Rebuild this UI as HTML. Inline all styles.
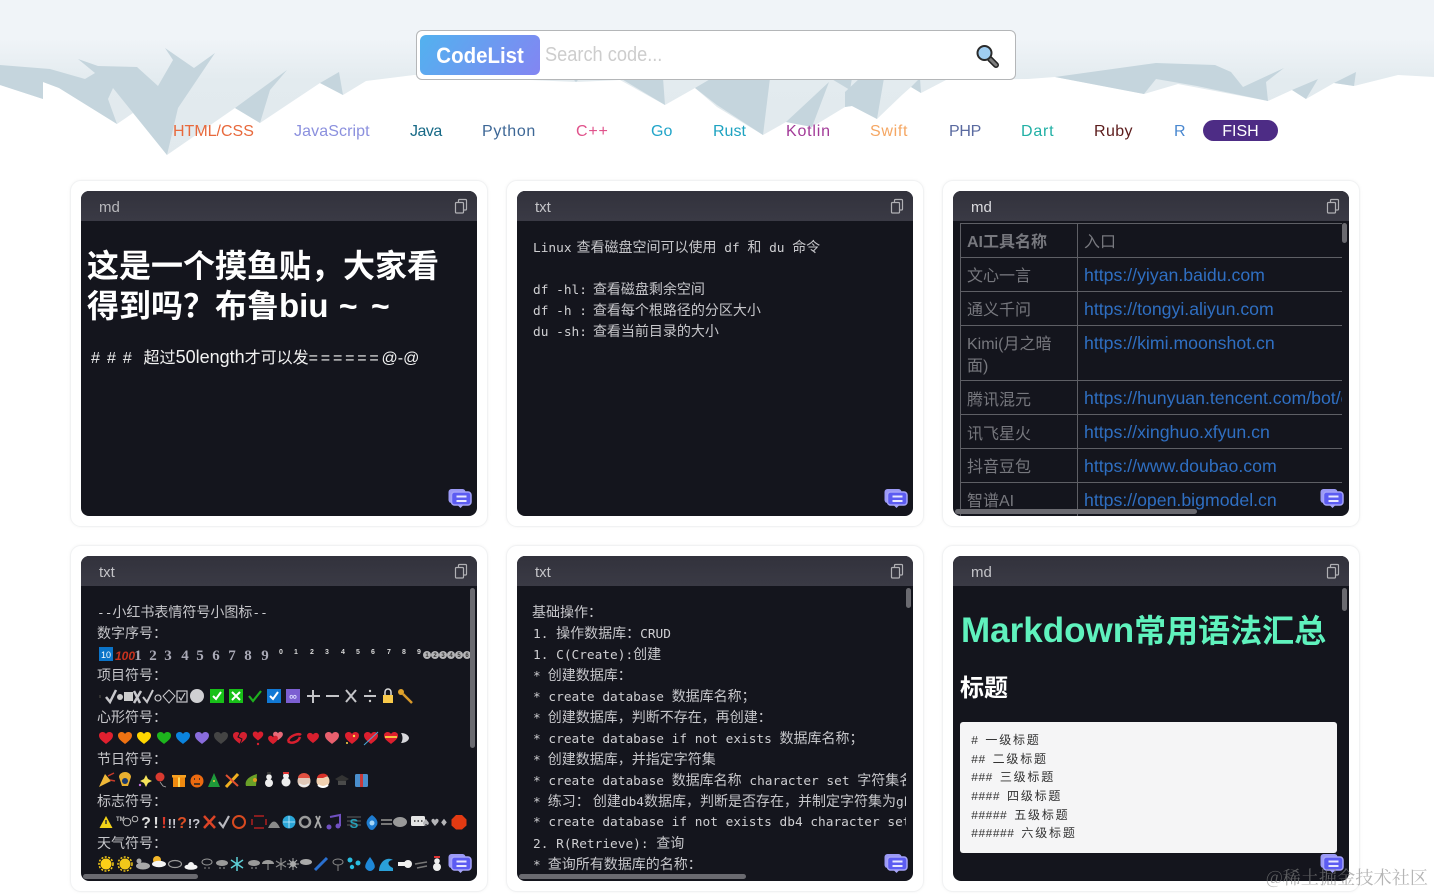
<!DOCTYPE html>
<html lang="zh"><head><meta charset="utf-8"><title>CodeList</title>
<style>
html,body{margin:0;padding:0;background:#fff;width:1434px;height:894px;overflow:hidden}
body{position:relative;font-family:"Liberation Sans","Noto Sans CJK SC",sans-serif}
.a{position:absolute;white-space:pre}
.nav{top:120px;font-size:16px;line-height:22px;height:22px;padding-top:1px}
.card{position:absolute;width:416px;height:345px;border:1px solid #f1f2f3;border-radius:11px;box-shadow:0 0 3px rgba(0,0,0,.05);background:#fff}
.inner{position:absolute;width:396px;height:325px;border-radius:8px;background:#14151d}
.head{position:absolute;left:0;top:0;width:396px;height:30px;border-radius:8px 8px 0 0;background:linear-gradient(#32323c,#3a3a45)}
.lab{position:absolute;top:1px;left:18px;font-size:15px;line-height:31px;color:#c4c4c8}
.clip{position:absolute;left:0;top:0;width:1434px;height:894px}
.l{position:absolute;white-space:pre;font:12.8px/21px "DejaVu Sans Mono","Liberation Mono","Noto Sans CJK SC",monospace;height:21px;color:#cfcfd2}
.l i{font:normal 14px/21px "Noto Sans CJK SC",sans-serif;color:#c6c6ca}
.bar{position:absolute;background:#6a6a70;border-radius:3px}
.tc{position:absolute;white-space:pre;font-size:16px;line-height:24px;color:#77787e;margin-top:2px}
.tl{position:absolute;white-space:pre;font-size:17.7px;line-height:24px;color:#2f6fc2;left:1084px}
.ln{position:absolute;background:#5e5f65}
.cb{position:absolute;white-space:pre;left:971px;font:12px/18px "Liberation Mono",monospace;color:#333;height:18px}
.cb i{font:normal 12px/18px "Noto Sans CJK SC",sans-serif;letter-spacing:1.8px}
svg{position:absolute;left:0;top:0}
</style></head><body>

<svg width="1434" height="170" viewBox="0 0 1434 170">
<defs><linearGradient id="g" x1="0" y1="0" x2="0" y2="1"><stop offset="0" stop-color="#f0f4f8"/><stop offset=".24" stop-color="#f0f4f8"/><stop offset=".5" stop-color="#e3ebef"/><stop offset="1" stop-color="#e1e9ed"/></linearGradient></defs>
<rect width="1434" height="160" fill="url(#g)"/>
<path fill="#fff" d="M0 85L43 99L43 82L59 88L117 124L133 113L167 155L235 108L260 123L320 83L343 95L366 81L414 75L576 82L620 80L665 105L695 88L717 107L763 135L786 122L812 127L845 107L852 106L877 119L902 95L911 87L921 93L946 80L1028 79L1055 77L1144 94L1178 84L1268 101L1292 90L1306 99L1334 83L1354 86L1398 75L1434 77V170H0Z"/>
<g fill="#c5d5dd">
<path d="M0 65L50 69L85 79L95 73L78 59L98 66L137 67L158 86L173 60L165 48L194 68L215 53L178 108L167 155L113 88L108 99L117 124L59 88L43 82L43 99L0 85Z"/>
<path d="M235 108L287 70L270 90L260 123Z"/>
<path d="M320 83L339 72L343 95Z"/>
<path d="M572 78L580 78L576 82Z"/>
<path d="M620 78L665 105L663 78Z"/>
<path d="M695 88L717 105L763 135L770 78L712 78Z"/>
<path d="M786 122L829 82L812 127Z"/>
<path d="M830 78L850 90L852 78Z"/>
<path d="M845 92L845 107L852 106L877 119L884 78L860 78Z"/>
<path d="M911 87L920 78L921 93Z"/>
<path d="M1055 77L1156 63L1215 65L1231 72L1243 87L1284 68L1266 82L1268 101L1197 86L1156 79L1144 94Z"/>
<path d="M1292 90L1318 79L1306 99Z"/>
<path d="M1334 83L1356 72L1354 86Z"/>
</g>
</svg>

<!-- search -->
<div class="a" style="left:416px;top:30px;width:598px;height:48px;border:1px solid #b4b6b8;border-radius:6px;background:#fff"></div>
<div class="a" style="left:420px;top:35px;width:120px;height:40px;border-radius:6px;background:linear-gradient(125deg,#52b2ef,#8385f2);color:#fff;font-weight:700;font-size:22px;line-height:41px;text-align:center"><span style="display:inline-block;transform:scaleX(.93)">CodeList</span></div>
<div class="a" style="left:545px;top:41px;font-size:20px;line-height:28px;color:#cdcdcd;transform:scaleX(.91);transform-origin:0 0">Search code...</div>
<svg width="1434" height="100" style="pointer-events:none">
<line x1="990" y1="59" x2="996" y2="65" stroke="#222" stroke-width="6" stroke-linecap="round"/>
<line x1="990" y1="59" x2="996" y2="65" stroke="#7d7d7d" stroke-width="3" stroke-linecap="round"/>
<circle cx="984.500" cy="53" r="7" fill="#9fcdf0" stroke="#2b2b2b" stroke-width="2"/>
</svg>

<!-- nav -->
<div class="a nav" style="left:173px;color:#e8693c">HTML/CSS</div>
<div class="a nav" style="left:294px;color:#8b90de;letter-spacing:.1px">JavaScript</div>
<div class="a nav" style="left:410px;color:#186a87;letter-spacing:-.5px">Java</div>
<div class="a nav" style="left:482px;color:#3d6796;letter-spacing:.7px">Python</div>
<div class="a nav" style="left:576px;color:#e0528b;letter-spacing:.8px">C++</div>
<div class="a nav" style="left:651px;color:#22a5c9">Go</div>
<div class="a nav" style="left:713px;color:#1ea3c1">Rust</div>
<div class="a nav" style="left:786px;color:#a23a98;letter-spacing:.8px">Kotlin</div>
<div class="a nav" style="left:870px;color:#f5a763;letter-spacing:.7px">Swift</div>
<div class="a nav" style="left:949px;color:#5a6aa0;letter-spacing:-.3px">PHP</div>
<div class="a nav" style="left:1021px;color:#21b0a5;letter-spacing:.8px">Dart</div>
<div class="a nav" style="left:1094px;color:#5c1c1c;letter-spacing:.4px">Ruby</div>
<div class="a nav" style="left:1174px;color:#4a88d0;letter-spacing:-.3px">R</div>
<div class="a" style="left:1203px;top:120px;width:75px;height:21px;border-radius:11px;background:#4d2c85;color:#fff;font-size:16px;line-height:23px;text-align:center">FISH</div>

<!-- cards -->
<div class="card" style="left:70px;top:180px"></div>
<div class="card" style="left:506px;top:180px"></div>
<div class="card" style="left:942px;top:180px"></div>
<div class="card" style="left:70px;top:545px"></div>
<div class="card" style="left:506px;top:545px"></div>
<div class="card" style="left:942px;top:545px"></div>

<div class="inner" style="left:81px;top:191px"><div class="head"></div><div class="lab" style="color:#b8b8bc">md</div></div>
<div class="inner" style="left:517px;top:191px"><div class="head"></div><div class="lab">txt</div></div>
<div class="inner" style="left:953px;top:191px"><div class="head"></div><div class="lab" style="color:#dcdce0">md</div></div>
<div class="inner" style="left:81px;top:556px"><div class="head"></div><div class="lab">txt</div></div>
<div class="inner" style="left:517px;top:556px"><div class="head"></div><div class="lab">txt</div></div>
<div class="inner" style="left:953px;top:556px"><div class="head"></div><div class="lab">md</div></div>

<!-- card 1 -->
<div class="a" style="left:87px;top:246px;font-size:32px;line-height:40px;font-weight:700;color:#fff;word-spacing:1.500px">这是一个摸鱼贴，大家看
得到吗？布鲁<span style="font-size:33px">biu</span> ~ <span style="margin-left:3px">~</span></div>
<div class="a" style="left:91px;top:345px;font-size:16px;line-height:24px;color:#f2f2f2"><span style="letter-spacing:1.300px"># # #</span><span style="margin-left:6px"> </span>超过<span style="font-size:18px">50length</span>才可以发<span style="letter-spacing:2.800px">======</span>@-@</div>

<!-- card 2 -->
<div class="l" style="left:533px;top:237px">Linux<i style="margin-left:5px">查看磁盘空间可以使用</i> df <i>和</i> du <i>命令</i></div>
<div class="l" style="left:533px;top:279px">df -hl:<i style="margin-left:6px">查看磁盘剩余空间</i></div>
<div class="l" style="left:533px;top:300px">df -h :<i style="margin-left:6px">查看每个根路径的分区大小</i></div>
<div class="l" style="left:533px;top:321px">du -sh:<i style="margin-left:6px">查看当前目录的大小</i></div>

<!-- card 3 -->
<div class="clip" style="clip-path:inset(222px 92px 378px 953px)">
<div class="ln" style="left:960px;top:223px;width:382px;height:1px"></div>
<div class="ln" style="left:960px;top:257px;width:382px;height:1px"></div>
<div class="ln" style="left:960px;top:291px;width:382px;height:1px"></div>
<div class="ln" style="left:960px;top:325px;width:382px;height:1px"></div>
<div class="ln" style="left:960px;top:380px;width:382px;height:1px"></div>
<div class="ln" style="left:960px;top:414px;width:382px;height:1px"></div>
<div class="ln" style="left:960px;top:448px;width:382px;height:1px"></div>
<div class="ln" style="left:960px;top:482px;width:382px;height:1px"></div>
<div class="ln" style="left:960px;top:223px;width:1px;height:300px"></div>
<div class="ln" style="left:1077px;top:223px;width:1px;height:300px"></div>
<div class="tc" style="left:967px;top:229px;font-weight:700;color:#77787e">AI工具名称</div>
<div class="tc" style="left:1084px;top:229px;color:#77787e">入口</div>
<div class="tc" style="left:967px;top:263px">文心一言</div>
<div class="tc" style="left:967px;top:297px">通义千问</div>
<div class="tc" style="left:967px;top:331px">Kimi(月之暗</div>
<div class="tc" style="left:967px;top:353px">面)</div>
<div class="tc" style="left:967px;top:387px">腾讯混元</div>
<div class="tc" style="left:967px;top:421px">讯飞星火</div>
<div class="tc" style="left:967px;top:454px">抖音豆包</div>
<div class="tc" style="left:967px;top:488px">智谱AI</div>
<div class="tl" style="top:263px">https://yiyan.baidu.com</div>
<div class="tl" style="top:297px">https://tongyi.aliyun.com</div>
<div class="tl" style="top:331px">https://kimi.moonshot.cn</div>
<div class="tl" style="top:386px">https://hunyuan.tencent.com/bot/chat</div>
<div class="tl" style="top:420px">https://xinghuo.xfyun.cn</div>
<div class="tl" style="top:454px">https://www.doubao.com</div>
<div class="tl" style="top:488px">https://open.bigmodel.cn</div>
</div>
<div class="bar" style="left:1342px;top:223px;width:5px;height:20px"></div>
<div class="bar" style="left:955px;top:509px;width:242px;height:5px"></div>

<!-- card 4 -->
<div class="l" style="left:97px;top:602px">--<i>小红书表情符号小图标</i>--</div>
<div class="l" style="left:97px;top:623px"><i>数字序号：</i></div>
<div class="l" style="left:97px;top:665px"><i>项目符号：</i></div>
<div class="l" style="left:97px;top:707px"><i>心形符号：</i></div>
<div class="l" style="left:97px;top:749px"><i>节日符号：</i></div>
<div class="l" style="left:97px;top:791px"><i>标志符号：</i></div>
<div class="l" style="left:97px;top:833px"><i>天气符号：</i></div>

<svg width="1434" height="894" style="clip-path:inset(556px 964px 15px 81px)" font-family="Liberation Sans" font-weight="700">
<!-- row 1 -->
<rect x="99" y="647" width="14" height="14" fill="#0b74c9"/><text x="106" y="658" font-size="9" fill="#fff" text-anchor="middle" font-weight="400">10</text>
<text x="125" y="660" font-size="12" font-style="italic" fill="#c8321e" text-anchor="middle">100</text>
<g font-size="15" fill="#a9a9b6" text-anchor="middle" font-family="Liberation Serif">
<text x="138" y="660">1</text><text x="153" y="660">2</text><text x="168" y="660">3</text><text x="185" y="660">4</text><text x="200" y="660">5</text><text x="216" y="660">6</text><text x="232" y="660">7</text><text x="248" y="660">8</text><text x="265" y="660">9</text></g>
<g font-size="7" fill="#d8d8d8" text-anchor="middle">
<text x="281" y="654">0</text><text x="296" y="654">1</text><text x="312" y="654">2</text><text x="327" y="654">3</text><text x="343" y="654">4</text><text x="358" y="654">5</text><text x="373" y="654">6</text><text x="389" y="654">7</text><text x="404" y="654">8</text><text x="419" y="654">9</text></g>
<g fill="#b5b5b8"><circle cx="427" cy="655" r="4"/><circle cx="435" cy="655" r="4"/><circle cx="443" cy="655" r="4"/><circle cx="451" cy="655" r="4"/><circle cx="459" cy="655" r="4"/><circle cx="467" cy="655" r="4"/></g>
<g font-size="6" fill="#333" text-anchor="middle"><text x="427" y="657">1</text><text x="435" y="657">2</text><text x="443" y="657">3</text><text x="451" y="657">4</text><text x="459" y="657">5</text><text x="467" y="657">6</text></g>
<!-- row 2 -->
<rect x="99" y="695" width="2" height="3" fill="#333"/>
<g fill="none" stroke="#c8c8cc" stroke-width="2">
<path d="M106 697L110 702L116 690" stroke-width="2.500"/>
<path d="M134 691L140 703M141 691L134 703" stroke-width="2.500"/>
<path d="M143 697L147 702L153 690" stroke-width="2"/>
<circle cx="158" cy="698" r="3" stroke-width="1.200"/>
<path d="M169 690L175 696L169 703L163 696Z" stroke-width="1"/>
<rect x="177" y="691" width="10" height="11" stroke-width="1.200"/><path d="M179 697L181 700L185 693" stroke-width="1.200"/>
<path d="M307 696H320M313 690V703M326 696H339M346 690L356 702M356 690L346 702M364 696H376" stroke="#c4c4c8" stroke-width="2"/>
</g>
<circle cx="120" cy="697" r="3" fill="#ccc"/><rect x="124" y="692" width="9" height="9" fill="#ccc"/>
<circle cx="197" cy="696" r="7" fill="#cfcfd2"/>
<rect x="210" y="689" width="14" height="14" fill="#18c018"/><path d="M213 696L216 699L221 692" fill="none" stroke="#fff" stroke-width="2"/>
<rect x="229" y="689" width="14" height="14" fill="#18c018"/><path d="M232 692L240 700M240 692L232 700" stroke="#fff" stroke-width="2"/>
<path d="M249 696L253 701L261 691" fill="none" stroke="#1eb01e" stroke-width="2.200"/>
<rect x="267" y="689" width="14" height="14" fill="#1178d4"/><path d="M270 696L273 699L278 692" fill="none" stroke="#fff" stroke-width="2"/>
<rect x="286" y="689" width="14" height="14" fill="#7c5fd2"/><text x="293" y="700" font-size="11" fill="#d8d8ff" text-anchor="middle">∞</text>
<circle cx="370" cy="691" r="1.200" fill="#ccc"/><circle cx="370" cy="701" r="1.200" fill="#ccc"/>
<rect x="383" y="695" width="10" height="8" fill="#f8c94a"/><path d="M385 695V692A3 3 0 0 1 391 692V695" fill="none" stroke="#ddd" stroke-width="1.500"/>
<circle cx="401" cy="692" r="3" fill="#e0a22a"/><path d="M403 694L412 703" stroke="#d8982a" stroke-width="2.500"/>
<!-- row 3 hearts -->
<g>
<path fill="#e0202f" transform="translate(106 738)" d="M0 6C-3 3.500-7 1-7-2.500C-7-5-5-6-3.500-6C-2-6-.7-5.200 0-4C.7-5.200 2-6 3.500-6C5-6 7-5 7-2.500C7 1 3 3.500 0 6Z"/>
<path fill="#ef7212" transform="translate(125 738)" d="M0 6C-3 3.500-7 1-7-2.500C-7-5-5-6-3.500-6C-2-6-.7-5.200 0-4C.7-5.200 2-6 3.500-6C5-6 7-5 7-2.500C7 1 3 3.500 0 6Z"/>
<path fill="#ffd600" transform="translate(144 738)" d="M0 6C-3 3.500-7 1-7-2.500C-7-5-5-6-3.500-6C-2-6-.7-5.200 0-4C.7-5.200 2-6 3.500-6C5-6 7-5 7-2.500C7 1 3 3.500 0 6Z"/>
<path fill="#1db51d" transform="translate(164 738)" d="M0 6C-3 3.500-7 1-7-2.500C-7-5-5-6-3.500-6C-2-6-.7-5.200 0-4C.7-5.200 2-6 3.500-6C5-6 7-5 7-2.500C7 1 3 3.500 0 6Z"/>
<path fill="#0b84de" transform="translate(183 738)" d="M0 6C-3 3.500-7 1-7-2.500C-7-5-5-6-3.500-6C-2-6-.7-5.200 0-4C.7-5.200 2-6 3.500-6C5-6 7-5 7-2.500C7 1 3 3.500 0 6Z"/>
<path fill="#8a6cdc" transform="translate(202 738)" d="M0 6C-3 3.500-7 1-7-2.500C-7-5-5-6-3.500-6C-2-6-.7-5.200 0-4C.7-5.200 2-6 3.500-6C5-6 7-5 7-2.500C7 1 3 3.500 0 6Z"/>
<path fill="#444" transform="translate(221 738)" d="M0 6C-3 3.500-7 1-7-2.500C-7-5-5-6-3.500-6C-2-6-.7-5.200 0-4C.7-5.200 2-6 3.500-6C5-6 7-5 7-2.500C7 1 3 3.500 0 6Z"/>
<path fill="#d42030" transform="translate(240 738)" d="M0 6C-3 3.500-7 1-7-2.500C-7-5-5-6-3.500-6C-2-6-.7-5.200 0-4C.7-5.200 2-6 3.500-6C5-6 7-5 7-2.500C7 1 3 3.500 0 6Z"/>
<path d="M240 733L238 737L242 739L240 744" fill="none" stroke="#14151d" stroke-width="1"/>
<path fill="#d81f2e" transform="translate(258 736) scale(.75)" d="M0 6C-3 3.500-7 1-7-2.500C-7-5-5-6-3.500-6C-2-6-.7-5.200 0-4C.7-5.200 2-6 3.500-6C5-6 7-5 7-2.500C7 1 3 3.500 0 6Z"/><circle cx="258" cy="744" r="1.200" fill="#d81f2e"/>
<path fill="#e86a78" transform="translate(278 736) scale(.7)" d="M0 6C-3 3.500-7 1-7-2.500C-7-5-5-6-3.500-6C-2-6-.7-5.200 0-4C.7-5.200 2-6 3.500-6C5-6 7-5 7-2.500C7 1 3 3.500 0 6Z"/>
<path fill="#d81f2e" transform="translate(273 740) scale(.7)" d="M0 6C-3 3.500-7 1-7-2.500C-7-5-5-6-3.500-6C-2-6-.7-5.200 0-4C.7-5.200 2-6 3.500-6C5-6 7-5 7-2.500C7 1 3 3.500 0 6Z"/>
<path d="M288 741C290 735 299 733 301 735M300 737C298 743 290 744 288 741" fill="none" stroke="#d81f2e" stroke-width="2.500"/>
<path fill="#d81f2e" transform="translate(313 738) scale(.85)" d="M0 6C-3 3.500-7 1-7-2.500C-7-5-5-6-3.500-6C-2-6-.7-5.200 0-4C.7-5.200 2-6 3.500-6C5-6 7-5 7-2.500C7 1 3 3.500 0 6Z"/>
<path fill="#e9606e" transform="translate(332 738)" d="M0 6C-3 3.500-7 1-7-2.500C-7-5-5-6-3.500-6C-2-6-.7-5.200 0-4C.7-5.200 2-6 3.500-6C5-6 7-5 7-2.500C7 1 3 3.500 0 6Z"/>
<path fill="#dd1f2e" transform="translate(352 738)" d="M0 6C-3 3.500-7 1-7-2.500C-7-5-5-6-3.500-6C-2-6-.7-5.200 0-4C.7-5.200 2-6 3.500-6C5-6 7-5 7-2.500C7 1 3 3.500 0 6Z"/><circle cx="354" cy="736" r="1.200" fill="#ffd84a"/><circle cx="347" cy="743" r="1" fill="#ffd84a"/>
<path fill="#dd1f2e" transform="translate(371 738)" d="M0 6C-3 3.500-7 1-7-2.500C-7-5-5-6-3.500-6C-2-6-.7-5.200 0-4C.7-5.200 2-6 3.500-6C5-6 7-5 7-2.500C7 1 3 3.500 0 6Z"/><path d="M364 745L378 732" stroke="#4aa8d8" stroke-width="1"/>
<path fill="#dd1f2e" transform="translate(391 738)" d="M0 6C-3 3.500-7 1-7-2.500C-7-5-5-6-3.500-6C-2-6-.7-5.200 0-4C.7-5.200 2-6 3.500-6C5-6 7-5 7-2.500C7 1 3 3.500 0 6Z"/><rect x="385" y="736" width="12" height="2" fill="#f5c040"/>
<path d="M401 733C406 733 409 736 409 738C409 740 406 743 401 743C403 740 403 736 401 733Z" fill="#d8d8dc"/>
</g>
<!-- row 4 -->
<path d="M99 787L105 774L111 781Z" fill="#f0b838"/><path d="M108 776L114 773M110 780L115 781" stroke="#c63a2a" stroke-width="1.500"/>
<path d="M119 777A6 5 0 0 1 131 777L128 786H122Z" fill="#e8b030"/><circle cx="125" cy="781" r="3" fill="#1a3a70"/>
<path d="M146 775L148 779L152 781L148 783L146 787L144 783L140 781L144 779Z" fill="#f6e35a"/><circle cx="140" cy="785" r="1.200" fill="#c070e0"/>
<circle cx="160" cy="777" r="4.500" fill="#d83a30"/><path d="M160 782L163 786L166 787" fill="none" stroke="#aaa" stroke-width=".8"/>
<rect x="173" y="777" width="12" height="10" fill="#f08a10"/><rect x="178" y="775" width="2" height="12" fill="#ffd95a"/><rect x="172" y="775" width="14" height="2.500" fill="#f5a020"/>
<circle cx="197" cy="781" r="6.500" fill="#ec6a10"/><path d="M194 779h1M199 779h1M194 784h6" stroke="#222" stroke-width="1.500"/>
<path d="M214 773L220 787H208Z" fill="#1e9a3a"/><circle cx="214" cy="781" r="1" fill="#f0d040"/>
<path d="M226 787L238 774" stroke="#f0b020" stroke-width="3"/><path d="M226 775L238 786" stroke="#e05030" stroke-width="2"/>
<path d="M246 786C244 780 250 776 257 774L256 786Z" fill="#6aa028"/><circle cx="255" cy="780" r="2" fill="#e0a020"/>
<circle cx="269" cy="777" r="2.800" fill="#eee"/><circle cx="269" cy="783" r="4" fill="#eee"/><rect x="267" y="772" width="4" height="2.500" fill="#333"/>
<circle cx="286" cy="776" r="3" fill="#eee"/><circle cx="286" cy="782" r="4.500" fill="#eee"/><rect x="283" y="772" width="6" height="2" fill="#d33"/>
<circle cx="304" cy="781" r="6.500" fill="#e0c8b8"/><path d="M298 778A6 5 0 0 1 310 778Z" fill="#e05040"/><path d="M299 784Q304 788 309 784" stroke="#eee" stroke-width="2" fill="none"/>
<circle cx="323" cy="781" r="6.500" fill="#f0d0b0"/><path d="M317 778A6 5 0 0 1 328 776L323 778Z" fill="#d83028"/><path d="M318 785Q323 789 328 785" stroke="#fff" stroke-width="2" fill="none"/>
<path d="M335 779L342 775L349 779L342 783Z" fill="#333"/><path d="M338 781V785H346V781" fill="#4a4a4a"/>
<rect x="355" y="774" width="13" height="13" rx="1.500" fill="#4a8ecc"/><rect x="360" y="774" width="3" height="13" fill="#c83a3a"/>
<!-- row 5 -->
<path d="M106 816L112.500 828H99.500Z" fill="#f3d318"/><path d="M106 820V824" stroke="#333" stroke-width="1.500"/>
<text x="116" y="821" font-size="6" fill="#bbb">TM</text><circle cx="127" cy="822" r="3.800" fill="none" stroke="#bbb"/><circle cx="135" cy="819" r="2.800" fill="none" stroke="#bbb"/>
<text x="146" y="828" font-size="16" fill="#dcdcdc" text-anchor="middle">?</text>
<text x="156" y="828" font-size="16" fill="#dcdcdc" text-anchor="middle">!</text>
<text x="164" y="828" font-size="16" fill="#d8392b" text-anchor="middle">!</text>
<text x="172" y="828" font-size="13" fill="#c8c8d0" text-anchor="middle">!!</text>
<text x="182" y="828" font-size="16" fill="#dc4e24" text-anchor="middle">?</text>
<text x="194" y="828" font-size="13" fill="#c8c8d0" text-anchor="middle">!?</text>
<path d="M204 816L215 828M215 816L204 828" stroke="#dc4426" stroke-width="2.500"/>
<path d="M219 822L223 827L229 816" fill="none" stroke="#b8b8be" stroke-width="2.200"/>
<circle cx="239" cy="822" r="6" fill="none" stroke="#d84a20" stroke-width="2"/>
<path d="M254 816L264 816M254 828H264M252 819V825M266 819V825" stroke="#b02020" stroke-width="1.500"/>
<path d="M268 828Q274 815 280 828Z" fill="#8a8a8a"/>
<circle cx="289" cy="822" r="6.500" fill="#2aa6d8"/><path d="M283 822H295M289 816V828" stroke="#cdeeff" stroke-width=".8"/>
<circle cx="305" cy="822" r="5" fill="none" stroke="#9a9a9a" stroke-width="2.500"/>
<path d="M315 828L320 816M321 828L316 816" stroke="#a9a9a9" stroke-width="1.800"/>
<path d="M330 817L340 815V826" fill="none" stroke="#7050c0" stroke-width="2"/><circle cx="329" cy="827" r="2.500" fill="#7050c0"/><circle cx="338" cy="826" r="2.500" fill="#7050c0"/>
<path d="M347 817H361M347 821H361M347 825H361" stroke="#777" stroke-width=".8"/><text x="354" y="828" font-size="13" fill="#26a0b8" text-anchor="middle">S</text>
<path d="M372 815Q379 820 377 825Q374 830 372 830Q369 830 367 825Q365 820 372 815Z" fill="#1e7cd0"/><circle cx="372" cy="823" r="2.500" fill="#a8d8f8"/>
<path d="M381 820H392M381 824H392" stroke="#777" stroke-width="2"/>
<ellipse cx="400" cy="822" rx="7" ry="5" fill="#999"/>
<rect x="411" y="816" width="14" height="10" rx="1.500" fill="#e4e4e4"/><path d="M414 821h1.500M417.500 821h1.500M421 821h1.500" stroke="#333" stroke-width="1.500"/>
<text x="435" y="826" font-size="10" fill="#b5b5b8" text-anchor="middle" font-family="DejaVu Sans">♠♥♦</text>
<path d="M456 815H462L466.500 819.500V825.500L462 829.500H456L451.500 825.500V819.500Z" fill="#e23a12"/>
<!-- row 6 -->
<circle cx="106" cy="864" r="5.500" fill="#fdd017"/><circle cx="106" cy="864" r="7" fill="none" stroke="#fdd017" stroke-width="1.500" stroke-dasharray="2 1.500"/>
<circle cx="125" cy="864" r="5.500" fill="#f2c81a"/><circle cx="125" cy="864" r="7" fill="none" stroke="#f2c81a" stroke-width="1.500" stroke-dasharray="2 1.500"/>
<ellipse cx="143" cy="866" rx="7" ry="3.500" fill="#a8a8a8"/><circle cx="139" cy="861" r="2.500" fill="#a8a8a8"/>
<circle cx="157" cy="860" r="4" fill="#f5b82a"/><ellipse cx="159" cy="864" rx="7" ry="3.200" fill="#f5f5f5"/>
<ellipse cx="175" cy="864" rx="6.500" ry="3.500" fill="none" stroke="#999" stroke-width="1.200"/>
<ellipse cx="191" cy="867" rx="6.500" ry="2.800" fill="#f4f4f4"/><circle cx="191" cy="865" r="3" fill="#f4f4f4"/>
<ellipse cx="207" cy="862" rx="5" ry="3" fill="none" stroke="#999"/>
<path d="M205 867v2M209 867v2" stroke="#888"/>
<ellipse cx="222" cy="863" rx="6" ry="3" fill="#9a9a9a"/><path d="M220 867v2M224 867v2" stroke="#9a9a9a"/>
<path d="M237 857V871M231 860L243 868M243 860L231 868" stroke="#5fd0d8" stroke-width="1.500"/>
<ellipse cx="254" cy="863" rx="6" ry="3" fill="#9a9a9a"/><path d="M252 867v2M256 867v2" stroke="#9a9a9a"/>
<path d="M262 864A6 4 0 0 1 274 864Z" fill="#9a9a9a"/><path d="M268 864V870" stroke="#9a9a9a"/>
<path d="M281 858V870M276 861L286 867M286 861L276 867" stroke="#8a8a8a" stroke-width="1.200"/>
<circle cx="293" cy="864" r="3" fill="#aaa"/><path d="M293 858V870M287 864H299M289 860L297 868M297 860L289 868" stroke="#aaa"/>
<ellipse cx="306" cy="862" rx="6" ry="3" fill="#aaa"/>
<path d="M315 870L327 858" stroke="#2a70d0" stroke-width="3"/>
<ellipse cx="338" cy="862" rx="5" ry="3" fill="none" stroke="#888"/><path d="M338 865V871" stroke="#888"/>
<circle cx="350" cy="860" r="2.500" fill="#29bde0"/><circle cx="358" cy="863" r="2.500" fill="#29bde0"/><circle cx="352" cy="867" r="2.200" fill="#29bde0"/>
<path d="M370 857Q376 865 374.500 868Q372.500 871 370 871Q367.500 871 365.500 868Q364 865 370 857Z" fill="#1e88d8"/>
<path d="M379 871C379 862 387 856 393 860C388 860 386 865 393 868V871Z" fill="#2aa0d8"/>
<path d="M398 864H409" stroke="#f0f0f0" stroke-width="4"/><circle cx="408" cy="864" r="4" fill="#f0f0f0"/>
<path d="M415 864L427 862M417 868L427 866" stroke="#777" stroke-width="1.500"/>
<circle cx="437" cy="861" r="2.800" fill="#eee"/><circle cx="437" cy="867" r="4" fill="#eee"/><rect x="434" y="856" width="6" height="2" fill="#d33"/>
</svg>
<div class="bar" style="left:470px;top:588px;width:5px;height:160px"></div>
<div class="bar" style="left:83px;top:874px;width:115px;height:5px"></div>

<!-- card 5 -->
<div class="clip" style="clip-path:inset(556px 528px 20px 517px)">
<div class="l" style="left:532px;top:602px"><i>基础操作：</i></div>
<div class="l" style="left:533px;top:623px">1. <i>操作数据库：</i>CRUD</div>
<div class="l" style="left:533px;top:644px">1. C(Create):<i>创建</i></div>
<div class="l" style="left:533px;top:665px">*<i style="margin-left:7px">创建数据库：</i></div>
<div class="l" style="left:533px;top:686px">* create database <i>数据库名称；</i></div>
<div class="l" style="left:533px;top:707px">*<i style="margin-left:7px">创建数据库，判断不存在，再创建：</i></div>
<div class="l" style="left:533px;top:728px">* create database if not exists <i>数据库名称；</i></div>
<div class="l" style="left:533px;top:749px">*<i style="margin-left:7px">创建数据库，并指定字符集</i></div>
<div class="l" style="left:533px;top:770px">* create database <i>数据库名称</i> character set <i>字符集名；</i></div>
<div class="l" style="left:533px;top:791px">*<i style="margin-left:7px">练习： 创建</i>db4<i>数据库，判断是否存在，并制定字符集为</i>gbk</div>
<div class="l" style="left:533px;top:812px">* create database if not exists db4 character set gbk;</div>
<div class="l" style="left:533px;top:833px">2. R(Retrieve): <i>查询</i></div>
<div class="l" style="left:533px;top:854px">*<i style="margin-left:7px">查询所有数据库的名称：</i></div>
</div>
<div class="bar" style="left:906px;top:588px;width:5px;height:20px"></div>
<div class="bar" style="left:519px;top:874px;width:227px;height:5px"></div>

<!-- card 6 -->
<div class="a" style="left:961px;top:609px;font-size:32px;line-height:44px;font-weight:700;color:#5ff2bd"><span style="font-size:35px">Markdown</span>常用语法汇总</div>
<div class="a" style="left:960px;top:672px;font-size:24px;line-height:34px;font-weight:700;color:#fff">标题</div>
<div class="a" style="left:960px;top:722px;width:377px;height:131px;background:#f5f5f6;border-radius:3px"></div>
<div class="cb" style="top:731px"># <i>一级标题</i></div>
<div class="cb" style="top:750px">## <i>二级标题</i></div>
<div class="cb" style="top:768px">### <i>三级标题</i></div>
<div class="cb" style="top:787px">#### <i>四级标题</i></div>
<div class="cb" style="top:806px">##### <i>五级标题</i></div>
<div class="cb" style="top:824px">###### <i>六级标题</i></div>
<div class="bar" style="left:1342px;top:588px;width:5px;height:23px"></div>

<!-- copy + chat icons -->
<svg width="1434" height="894">
<g fill="none" stroke="#b0b0b4" stroke-width="1.200">
<path d="M458.500 202.500V200.500Q458.500 199.500 459.500 199.500H465.500Q466.500 199.500 466.500 200.500V209Q466.500 210 465.500 210H463.500M456.500 202.500H462.500Q463.500 202.500 463.500 203.500V212Q463.500 213 462.500 213H456.500Q455.500 213 455.500 212V203.500Q455.500 202.500 456.500 202.500Z"/>
<path transform="translate(436 0)" d="M458.500 202.500V200.500Q458.500 199.500 459.500 199.500H465.500Q466.500 199.500 466.500 200.500V209Q466.500 210 465.500 210H463.500M456.500 202.500H462.500Q463.500 202.500 463.500 203.500V212Q463.500 213 462.500 213H456.500Q455.500 213 455.500 212V203.500Q455.500 202.500 456.500 202.500Z"/>
<path transform="translate(872 0)" d="M458.500 202.500V200.500Q458.500 199.500 459.500 199.500H465.500Q466.500 199.500 466.500 200.500V209Q466.500 210 465.500 210H463.500M456.500 202.500H462.500Q463.500 202.500 463.500 203.500V212Q463.500 213 462.500 213H456.500Q455.500 213 455.500 212V203.500Q455.500 202.500 456.500 202.500Z"/>
<path transform="translate(0 365)" d="M458.500 202.500V200.500Q458.500 199.500 459.500 199.500H465.500Q466.500 199.500 466.500 200.500V209Q466.500 210 465.500 210H463.500M456.500 202.500H462.500Q463.500 202.500 463.500 203.500V212Q463.500 213 462.500 213H456.500Q455.500 213 455.500 212V203.500Q455.500 202.500 456.500 202.500Z"/>
<path transform="translate(436 365)" d="M458.500 202.500V200.500Q458.500 199.500 459.500 199.500H465.500Q466.500 199.500 466.500 200.500V209Q466.500 210 465.500 210H463.500M456.500 202.500H462.500Q463.500 202.500 463.500 203.500V212Q463.500 213 462.500 213H456.500Q455.500 213 455.500 212V203.500Q455.500 202.500 456.500 202.500Z"/>
<path transform="translate(872 365)" d="M458.500 202.500V200.500Q458.500 199.500 459.500 199.500H465.500Q466.500 199.500 466.500 200.500V209Q466.500 210 465.500 210H463.500M456.500 202.500H462.500Q463.500 202.500 463.500 203.500V212Q463.500 213 462.500 213H456.500Q455.500 213 455.500 212V203.500Q455.500 202.500 456.500 202.500Z"/>
</g>
<g transform="translate(448.500 489)"><rect width="17" height="14" rx="3" fill="#9b99f6"/><rect x="3" y="3" width="19.500" height="13" rx="3" fill="#5c5cf2" stroke="#a5a3f8" stroke-width="1.500"/><path d="M9 16H15L12 19Z" fill="#a5a3f8"/><path d="M8 7.500H18M8 12H18" stroke="#e8e8ff" stroke-width="2"/></g>
<g transform="translate(884.500 489)"><rect width="17" height="14" rx="3" fill="#9b99f6"/><rect x="3" y="3" width="19.500" height="13" rx="3" fill="#5c5cf2" stroke="#a5a3f8" stroke-width="1.500"/><path d="M9 16H15L12 19Z" fill="#a5a3f8"/><path d="M8 7.500H18M8 12H18" stroke="#e8e8ff" stroke-width="2"/></g>
<g transform="translate(1320.500 489)"><rect width="17" height="14" rx="3" fill="#9b99f6"/><rect x="3" y="3" width="19.500" height="13" rx="3" fill="#5c5cf2" stroke="#a5a3f8" stroke-width="1.500"/><path d="M9 16H15L12 19Z" fill="#a5a3f8"/><path d="M8 7.500H18M8 12H18" stroke="#e8e8ff" stroke-width="2"/></g>
<g transform="translate(448.500 854)"><rect width="17" height="14" rx="3" fill="#9b99f6"/><rect x="3" y="3" width="19.500" height="13" rx="3" fill="#5c5cf2" stroke="#a5a3f8" stroke-width="1.500"/><path d="M9 16H15L12 19Z" fill="#a5a3f8"/><path d="M8 7.500H18M8 12H18" stroke="#e8e8ff" stroke-width="2"/></g>
<g transform="translate(884.500 854)"><rect width="17" height="14" rx="3" fill="#9b99f6"/><rect x="3" y="3" width="19.500" height="13" rx="3" fill="#5c5cf2" stroke="#a5a3f8" stroke-width="1.500"/><path d="M9 16H15L12 19Z" fill="#a5a3f8"/><path d="M8 7.500H18M8 12H18" stroke="#e8e8ff" stroke-width="2"/></g>
<g transform="translate(1320.500 854)"><rect width="17" height="14" rx="3" fill="#9b99f6"/><rect x="3" y="3" width="19.500" height="13" rx="3" fill="#5c5cf2" stroke="#a5a3f8" stroke-width="1.500"/><path d="M9 16H15L12 19Z" fill="#a5a3f8"/><path d="M8 7.500H18M8 12H18" stroke="#e8e8ff" stroke-width="2"/></g>
</svg>

<div class="a" style="left:1266px;top:864px;font-family:'Noto Serif CJK SC','Liberation Serif',serif;font-size:18.2px;line-height:26px;color:rgba(135,135,135,.62)">@稀土掘金技术社区</div>
</body></html>
